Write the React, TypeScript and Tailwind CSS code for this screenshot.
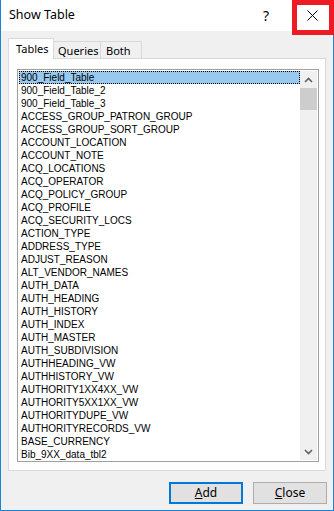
import React from "react";

const items = [
  "900_Field_Table",
  "900_Field_Table_2",
  "900_Field_Table_3",
  "ACCESS_GROUP_PATRON_GROUP",
  "ACCESS_GROUP_SORT_GROUP",
  "ACCOUNT_LOCATION",
  "ACCOUNT_NOTE",
  "ACQ_LOCATIONS",
  "ACQ_OPERATOR",
  "ACQ_POLICY_GROUP",
  "ACQ_PROFILE",
  "ACQ_SECURITY_LOCS",
  "ACTION_TYPE",
  "ADDRESS_TYPE",
  "ADJUST_REASON",
  "ALT_VENDOR_NAMES",
  "AUTH_DATA",
  "AUTH_HEADING",
  "AUTH_HISTORY",
  "AUTH_INDEX",
  "AUTH_MASTER",
  "AUTH_SUBDIVISION",
  "AUTHHEADING_VW",
  "AUTHHISTORY_VW",
  "AUTHORITY1XX4XX_VW",
  "AUTHORITY5XX1XX_VW",
  "AUTHORITYDUPE_VW",
  "AUTHORITYRECORDS_VW",
  "BASE_CURRENCY",
  "Bib_9XX_data_tbl2",
];

const ui = { fontFamily: '"Noto Sans", "Open Sans", sans-serif' };
const listFont = { fontFamily: '"Liberation Sans", Arial, sans-serif' };

export default function App() {
  return (
    <div
      className="relative w-[334px] h-[511px] bg-[#f0f0f0] border-l border-r border-b border-[#1883d7] flex flex-col text-black"
      style={ui}
    >
      {/* Title bar */}
      <div className="h-[31px] bg-white flex items-center shrink-0">
        <span className="pl-[8px] text-[12.5px]">Show Table</span>
        <span className="ml-auto mr-[22px] text-[14px]">?</span>
        <div className="w-[42px] h-[31px] flex items-center justify-center">
          <svg width="11" height="11" viewBox="0 0 11 11">
            <path d="M0.5 0.5 L10.5 10.5 M10.5 0.5 L0.5 10.5" stroke="#000" strokeWidth="1" />
          </svg>
        </div>
      </div>

      {/* Tabs */}
      <div className="mt-[7px] ml-[7px] flex items-end h-[20px] text-[11px]">
        <div className="w-[46px] h-[21px] -mb-[1px] bg-white border-t border-l border-r border-[#d9d9d9] pl-[7px] pt-[2px] relative z-10">
          Tables
        </div>
        <div className="w-[47px] h-[17px] border-t border-r border-[#d9d9d9] pl-[4px] leading-[17px]">
          Queries
        </div>
        <div className="w-[41px] h-[17px] border-t border-r border-[#d9d9d9] pl-[5px] leading-[17px]">
          Both
        </div>
      </div>

      {/* Panel */}
      <div className="ml-[7px] w-[318px] h-[413px] bg-white border border-[#d9d9d9] pt-[10px] pl-[8px]">
        <div className="w-[302px] h-[393px] border border-[#a0a0a0] flex p-[1px]" style={listFont}>
          <div className="flex-1 flex flex-col">
            {items.map((t, i) => (
              <div
                key={t}
                className={
                  i === 0
                    ? "h-[13px] leading-[13px] text-[10px] pl-[2px] bg-[#99c9ef] outline outline-1 outline-dotted outline-black -outline-offset-1 whitespace-nowrap"
                    : "h-[13px] leading-[13px] text-[10px] pl-[2px] whitespace-nowrap"
                }
              >
                {t}
              </div>
            ))}
          </div>
          <div className="w-[17px] bg-[#f0f0f0] flex flex-col items-center">
            <div className="h-[17px] w-full flex items-center justify-center">
              <svg width="9" height="6" viewBox="0 0 9 6">
                <path d="M1 5 L4.5 1.5 L8 5" stroke="#606060" strokeWidth="1.6" fill="none" />
              </svg>
            </div>
            <div className="w-full h-[22px] bg-[#cdcdcd]" />
            <div className="flex-1" />
            <div className="h-[17px] w-full flex items-center justify-center">
              <svg width="9" height="6" viewBox="0 0 9 6">
                <path d="M1 1 L4.5 4.5 L8 1" stroke="#606060" strokeWidth="1.6" fill="none" />
              </svg>
            </div>
          </div>
        </div>
      </div>

      {/* Buttons */}
      <div className="mt-[11px] flex justify-end gap-[10px] pr-[6px] text-[12px]">
        <button className="w-[74px] h-[22px] bg-[#e1e1e1] border-2 border-[#0078d7] flex items-center justify-center">
          <span><span className="underline">A</span>dd</span>
        </button>
        <button className="w-[74px] h-[22px] bg-[#e1e1e1] border border-[#adadad] flex items-center justify-center">
          <span><span className="underline">C</span>lose</span>
        </button>
      </div>

      {/* Red highlight annotation */}
      <div className="absolute left-[291px] top-0 w-[42px] h-[35px] border-[5px] border-[#ed1c24]" />
    </div>
  );
}
